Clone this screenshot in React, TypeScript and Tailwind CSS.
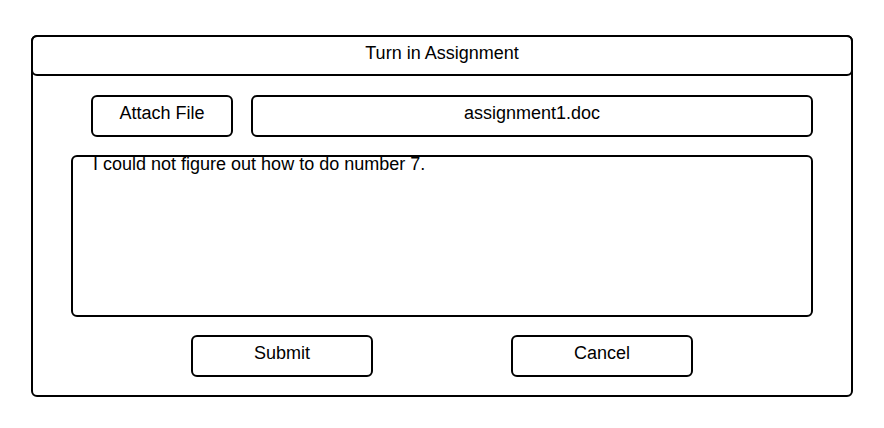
export default function App() {
  const font = { fontFamily: '"Liberation Sans", Arial, sans-serif' };
  return (
    <div className="w-[884px] h-[428px] bg-white text-black" style={font}>
      <div className="ml-[31px] pt-[35px]">
        <div className="w-[822px] h-[362px] border-2 border-black rounded-[6px] flex flex-col">
          <div className="-mt-[2px] -mx-[2px] h-[41px] border-2 border-black rounded-[6px] flex items-center justify-center pb-[5px] text-[18px]">
            Turn in Assignment
          </div>
          <div className="mt-[19px] ml-[58px] flex gap-[18px]">
            <div className="w-[142px] h-[42px] border-2 border-black rounded-[6px] flex items-center justify-center pb-[5px] text-[18px]">
              Attach File
            </div>
            <div className="w-[562px] h-[42px] border-2 border-black rounded-[6px] flex items-center justify-center pb-[5px] text-[18px]">
              assignment1.doc
            </div>
          </div>
          <div className="mt-[18px] ml-[38px] w-[742px] h-[162px] border-2 border-black rounded-[6px]">
            <div className="-mt-[3px] pl-[20px] text-[18px] leading-[20px]">
              I could not figure out how to do number 7.
            </div>
          </div>
          <div className="mt-[18px] ml-[158px] flex gap-[138px]">
            <div className="w-[182px] h-[42px] border-2 border-black rounded-[6px] flex items-center justify-center pb-[5px] text-[18px]">
              Submit
            </div>
            <div className="w-[182px] h-[42px] border-2 border-black rounded-[6px] flex items-center justify-center pb-[5px] text-[18px]">
              Cancel
            </div>
          </div>
        </div>
      </div>
    </div>
  );
}
